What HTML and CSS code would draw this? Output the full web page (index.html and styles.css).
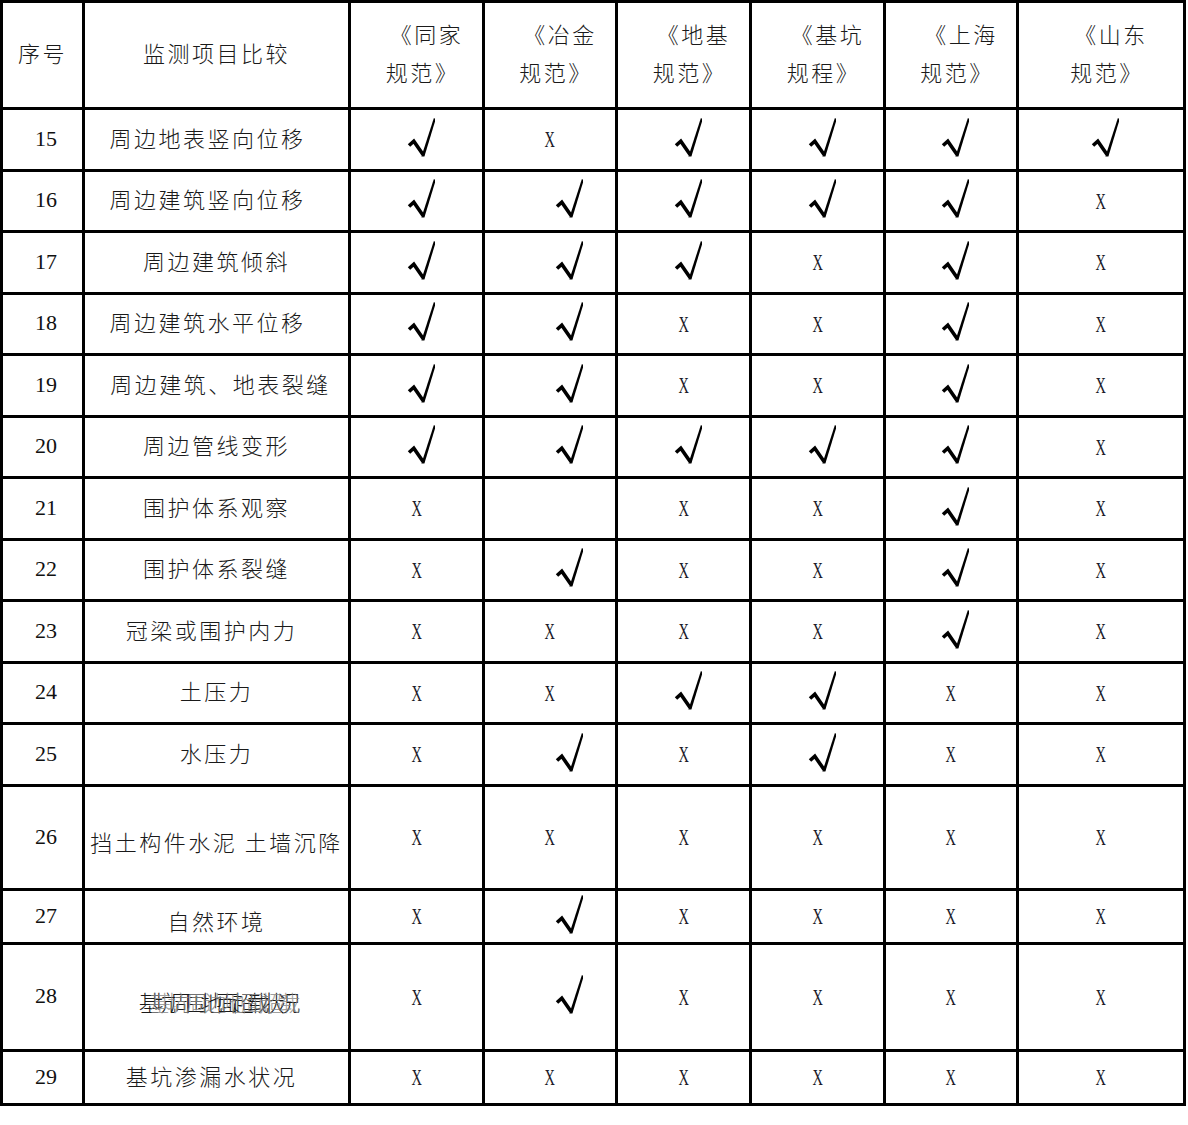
FILE: index.html
```html
<!DOCTYPE html>
<html lang="zh-CN">
<head>
<meta charset="utf-8">
<title>监测项目比较</title>
<link rel="stylesheet" href="styles.css">
</head>
<body>
<svg class="defs" width="0" height="0" aria-hidden="true">
  <symbol id="tick" viewBox="0 0 28 40">
    <path d="M2 28.5 L6.8 24.2 L16 37.6" fill="none" stroke="#000" stroke-width="3.6" stroke-linejoin="miter"/>
    <path d="M14.4 39.6 L17.4 39.6 L28.8 1.8 L26.8 1.2 Z" fill="#000"/>
  </symbol>
</svg>
<table class="cmp">
  <colgroup>
    <col class="w-no"><col class="w-item"><col class="w-a"><col class="w-b"><col class="w-c"><col class="w-d"><col class="w-e"><col class="w-f">
  </colgroup>
  <thead>
    <tr class="r-head">
      <th class="hd">序号</th>
      <th class="hd">监测项目比较</th>
      <th class="hd std">《同家<br>规范》</th>
      <th class="hd std">《冶金<br>规范》</th>
      <th class="hd std">《地基<br>规范》</th>
      <th class="hd std">《基坑<br>规程》</th>
      <th class="hd std">《上海<br>规范》</th>
      <th class="hd std">《山东<br>规范》</th>
    </tr>
  </thead>
  <tbody>
    <tr class="r62">
      <td class="no">15</td><td class="item sl9">周边地表竖向位移</td>
      <td class="mk"><svg class="chk"><use href="#tick"/></svg></td>
      <td class="mk c2"><span class="x">X</span></td>
      <td class="mk"><svg class="chk"><use href="#tick"/></svg></td>
      <td class="mk"><svg class="chk"><use href="#tick"/></svg></td>
      <td class="mk"><svg class="chk"><use href="#tick"/></svg></td>
      <td class="mk"><svg class="chk"><use href="#tick"/></svg></td>
    </tr>
    <tr class="r61">
      <td class="no">16</td><td class="item sl9">周边建筑竖向位移</td>
      <td class="mk"><svg class="chk"><use href="#tick"/></svg></td>
      <td class="mk c2"><svg class="chk"><use href="#tick"/></svg></td>
      <td class="mk"><svg class="chk"><use href="#tick"/></svg></td>
      <td class="mk"><svg class="chk"><use href="#tick"/></svg></td>
      <td class="mk"><svg class="chk"><use href="#tick"/></svg></td>
      <td class="mk"><span class="x">X</span></td>
    </tr>
    <tr class="r62">
      <td class="no">17</td><td class="item">周边建筑倾斜</td>
      <td class="mk"><svg class="chk"><use href="#tick"/></svg></td>
      <td class="mk c2"><svg class="chk"><use href="#tick"/></svg></td>
      <td class="mk"><svg class="chk"><use href="#tick"/></svg></td>
      <td class="mk"><span class="x">X</span></td>
      <td class="mk"><svg class="chk"><use href="#tick"/></svg></td>
      <td class="mk"><span class="x">X</span></td>
    </tr>
    <tr class="r61">
      <td class="no">18</td><td class="item sl9">周边建筑水平位移</td>
      <td class="mk"><svg class="chk"><use href="#tick"/></svg></td>
      <td class="mk c2"><svg class="chk"><use href="#tick"/></svg></td>
      <td class="mk"><span class="x">X</span></td>
      <td class="mk"><span class="x">X</span></td>
      <td class="mk"><svg class="chk"><use href="#tick"/></svg></td>
      <td class="mk"><span class="x">X</span></td>
    </tr>
    <tr class="r62">
      <td class="no">19</td><td class="item sr4">周边建筑、地表裂缝</td>
      <td class="mk"><svg class="chk"><use href="#tick"/></svg></td>
      <td class="mk c2"><svg class="chk"><use href="#tick"/></svg></td>
      <td class="mk"><span class="x">X</span></td>
      <td class="mk"><span class="x">X</span></td>
      <td class="mk"><svg class="chk"><use href="#tick"/></svg></td>
      <td class="mk"><span class="x">X</span></td>
    </tr>
    <tr class="r61">
      <td class="no">20</td><td class="item">周边管线变形</td>
      <td class="mk"><svg class="chk"><use href="#tick"/></svg></td>
      <td class="mk c2"><svg class="chk"><use href="#tick"/></svg></td>
      <td class="mk"><svg class="chk"><use href="#tick"/></svg></td>
      <td class="mk"><svg class="chk"><use href="#tick"/></svg></td>
      <td class="mk"><svg class="chk"><use href="#tick"/></svg></td>
      <td class="mk"><span class="x">X</span></td>
    </tr>
    <tr class="r62">
      <td class="no">21</td><td class="item">围护体系观察</td>
      <td class="mk"><span class="x">X</span></td>
      <td class="mk c2"></td>
      <td class="mk"><span class="x">X</span></td>
      <td class="mk"><span class="x">X</span></td>
      <td class="mk"><svg class="chk"><use href="#tick"/></svg></td>
      <td class="mk"><span class="x">X</span></td>
    </tr>
    <tr class="r61">
      <td class="no">22</td><td class="item">围护体系裂缝</td>
      <td class="mk"><span class="x">X</span></td>
      <td class="mk c2"><svg class="chk"><use href="#tick"/></svg></td>
      <td class="mk"><span class="x">X</span></td>
      <td class="mk"><span class="x">X</span></td>
      <td class="mk"><svg class="chk"><use href="#tick"/></svg></td>
      <td class="mk"><span class="x">X</span></td>
    </tr>
    <tr class="r62">
      <td class="no">23</td><td class="item sl5">冠梁或围护内力</td>
      <td class="mk"><span class="x">X</span></td>
      <td class="mk c2"><span class="x">X</span></td>
      <td class="mk"><span class="x">X</span></td>
      <td class="mk"><span class="x">X</span></td>
      <td class="mk"><svg class="chk"><use href="#tick"/></svg></td>
      <td class="mk"><span class="x">X</span></td>
    </tr>
    <tr class="r61">
      <td class="no">24</td><td class="item">土压力</td>
      <td class="mk"><span class="x">X</span></td>
      <td class="mk c2"><span class="x">X</span></td>
      <td class="mk"><svg class="chk"><use href="#tick"/></svg></td>
      <td class="mk"><svg class="chk"><use href="#tick"/></svg></td>
      <td class="mk"><span class="x">X</span></td>
      <td class="mk"><span class="x">X</span></td>
    </tr>
    <tr class="r62">
      <td class="no">25</td><td class="item">水压力</td>
      <td class="mk"><span class="x">X</span></td>
      <td class="mk c2"><svg class="chk"><use href="#tick"/></svg></td>
      <td class="mk"><span class="x">X</span></td>
      <td class="mk"><svg class="chk"><use href="#tick"/></svg></td>
      <td class="mk"><span class="x">X</span></td>
      <td class="mk"><span class="x">X</span></td>
    </tr>
    <tr class="r104">
      <td class="no">26</td><td class="item low">挡土构件水泥 土墙沉降</td>
      <td class="mk"><span class="x">X</span></td>
      <td class="mk c2"><span class="x">X</span></td>
      <td class="mk"><span class="x">X</span></td>
      <td class="mk"><span class="x">X</span></td>
      <td class="mk"><span class="x">X</span></td>
      <td class="mk"><span class="x">X</span></td>
    </tr>
    <tr class="r54">
      <td class="no">27</td><td class="item low">自然环境</td>
      <td class="mk"><span class="x">X</span></td>
      <td class="mk c2"><svg class="chk"><use href="#tick"/></svg></td>
      <td class="mk"><span class="x">X</span></td>
      <td class="mk"><span class="x">X</span></td>
      <td class="mk"><span class="x">X</span></td>
      <td class="mk"><span class="x">X</span></td>
    </tr>
    <tr class="r107">
      <td class="no">28</td>
      <td class="item low sr3"><span class="ovl"><span class="ovl-a">基坑周围地面超载状况</span><span class="ovl-b">基坑周边地面超载</span></span></td>
      <td class="mk"><span class="x">X</span></td>
      <td class="mk c2"><svg class="chk"><use href="#tick"/></svg></td>
      <td class="mk"><span class="x">X</span></td>
      <td class="mk"><span class="x">X</span></td>
      <td class="mk"><span class="x">X</span></td>
      <td class="mk"><span class="x">X</span></td>
    </tr>
    <tr class="r54">
      <td class="no">29</td><td class="item sl5">基坑渗漏水状况</td>
      <td class="mk"><span class="x">X</span></td>
      <td class="mk c2"><span class="x">X</span></td>
      <td class="mk"><span class="x">X</span></td>
      <td class="mk"><span class="x">X</span></td>
      <td class="mk"><span class="x">X</span></td>
      <td class="mk"><span class="x">X</span></td>
    </tr>
  </tbody>
</table>
</body>
</html>
```

FILE: styles.css
```css
html, body {
  margin: 0;
  padding: 0;
  background: #fff;
}

body {
  font-family: "Noto Sans CJK SC", "Noto Sans", sans-serif;
  color: #111;
}

.defs {
  position: absolute;
  width: 0;
  height: 0;
  overflow: hidden;
}

.cmp {
  width: 1186px;
  table-layout: fixed;
  border-collapse: separate;
  border-spacing: 0;
  border-top: 3px solid #000;
  border-left: 3px solid #000;
}

.w-no { width: 82px; }
.w-item { width: 266px; }
.w-a { width: 134px; }
.w-b { width: 133px; }
.w-c { width: 134px; }
.w-d { width: 134px; }
.w-e { width: 133px; }
.w-f { width: 167px; }

.cmp th,
.cmp td {
  box-sizing: border-box;
  border-right: 3px solid #000;
  border-bottom: 3px solid #000;
  padding: 0;
  text-align: center;
  vertical-align: middle;
  white-space: nowrap;
}

.r-head { height: 107px; }
.r62 { height: 62px; }
.r61 { height: 61px; }
.r104 { height: 104px; }
.r54 { height: 54px; }
.r107 { height: 107px; }

.cmp .hd {
  font-weight: 300;
  font-size: 22px;
  letter-spacing: 2.5px;
  line-height: 38px;
  color: #1a1a1a;
  padding-bottom: 7px;
}

.cmp .std {
  padding-left: 12px;
  text-indent: 8px;
}

.cmp .no {
  font-family: "Liberation Serif", "Times New Roman", serif;
  font-size: 22px;
  padding-left: 7px;
  padding-bottom: 2px;
  color: #111;
}

.cmp .item {
  font-weight: 300;
  font-size: 22px;
  letter-spacing: 2.5px;
  color: #1a1a1a;
  padding-bottom: 6px;
}

.cmp .sl9 { padding-right: 18px; }
.cmp .sl5 { padding-right: 10px; }
.cmp .sr4 { padding-left: 8px; }
.cmp .sr3 { padding-left: 6px; }
.cmp .low { padding-top: 11px; padding-bottom: 4px; }

.ovl {
  position: relative;
  display: inline-block;
}

.ovl-a {
  letter-spacing: -6.5px;
  margin-right: 6.5px;
}

.ovl-b {
  position: absolute;
  left: 10px;
  top: 0;
  letter-spacing: -3.5px;
  color: #888;
  opacity: 0.8;
}

.x {
  display: inline-block;
  font-family: "Liberation Serif", "Times New Roman", serif;
  font-size: 24px;
  line-height: 24px;
  transform: scaleX(0.6);
  color: #1c1c2a;
}

.chk {
  display: block;
  width: 28px;
  height: 40px;
  margin: -6px auto 0;
  transform: translateX(4px);
}

.c2 .chk {
  transform: translateX(19px);
}
```
